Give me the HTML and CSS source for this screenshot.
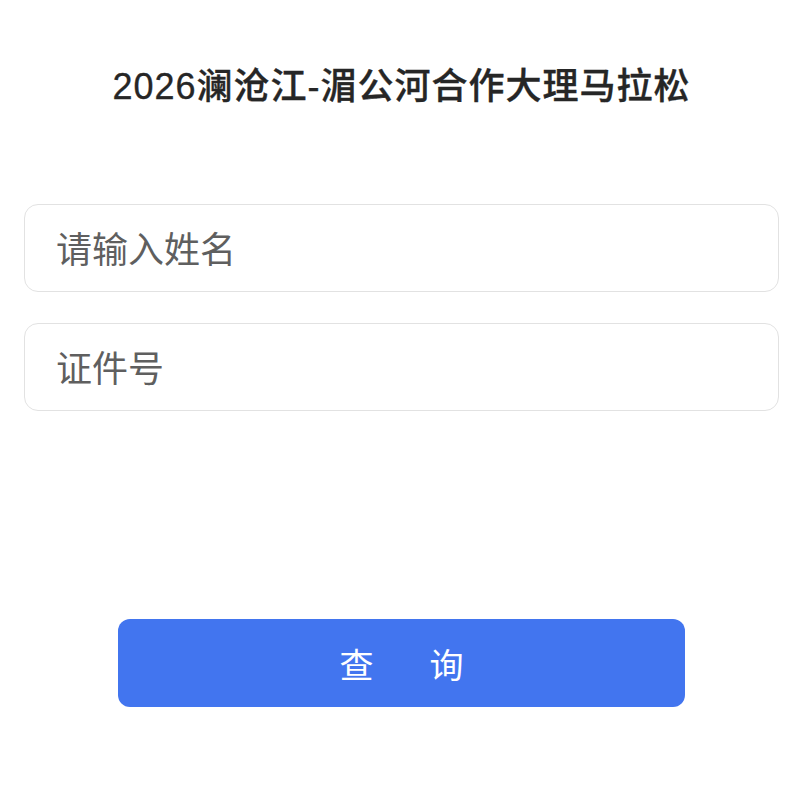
FILE: index.html
```html
<!DOCTYPE html>
<html lang="zh-CN">
<head>
<meta charset="utf-8">
<title>2026澜沧江-湄公河合作大理马拉松</title>
<link rel="stylesheet" href="styles.css">
</head>
<body>
<div class="page">
  <h1 class="title">2026澜沧江-湄公河合作大理马拉松</h1>
  <form class="form">
    <input class="field" type="text" placeholder="请输入姓名">
    <input class="field" type="text" placeholder="证件号">
  </form>
  <button class="submit" type="button">查询</button>
</div>
</body>
</html>
```

FILE: styles.css
```css
html, body {
  margin: 0;
  padding: 0;
  background: #ffffff;
}
body {
  font-family: "Noto Sans CJK SC", "Noto Sans", sans-serif;
}
.page {
  display: flex;
  flex-direction: column;
  padding: 0 21px 0 24px;
}
.title {
  margin: 63px 0 0 0;
  font-family: "Liberation Sans", "Noto Sans CJK SC", sans-serif;
  font-size: 36px;
  line-height: 48px;
  font-weight: 500;
  letter-spacing: 1px;
  color: #262626;
  -webkit-text-stroke: 0.35px #262626;
  text-align: center;
}
.form {
  display: flex;
  flex-direction: column;
  gap: 31px;
  margin-top: 93px;
}
.field {
  box-sizing: border-box;
  height: 88px;
  width: 100%;
  border: 1.5px solid #e2e2e2;
  border-radius: 14px;
  padding: 0 0 2px 31px;
  font-family: "Noto Sans CJK SC", "Noto Sans", sans-serif;
  font-size: 36px;
  color: #333;
  background: #fff;
  outline: none;
}
.field::placeholder {
  color: #5f5f5f;
}
.submit {
  box-sizing: border-box;
  margin: 208px 0 0 94px;
  width: 567px;
  height: 88px;
  border: none;
  border-radius: 12px;
  background: #4275ef;
  color: #fff;
  font-family: "Noto Sans CJK SC", "Noto Sans", sans-serif;
  font-size: 34px;
  letter-spacing: 56px;
  padding: 0 0 0 56px;
  cursor: pointer;
}
```
